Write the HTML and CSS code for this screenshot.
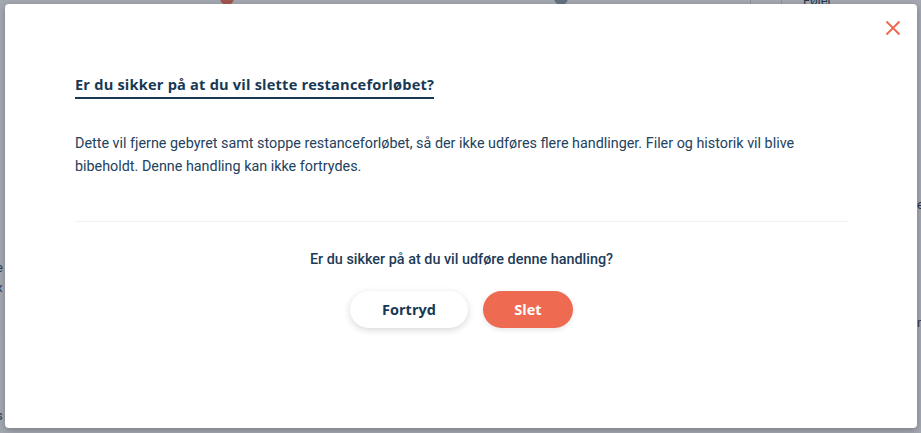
FILE: index.html
```html
<!DOCTYPE html>
<html lang="da">
<head>
<meta charset="utf-8">
<title>Slet restanceforløb</title>
<link rel="stylesheet" href="styles.css">
</head>
<body>
<div class="page">
  <span class="bg-dot bg-dot-red"></span>
  <span class="bg-dot bg-dot-grey"></span>
  <span class="bg-vline bg-vline-1"></span>
  <span class="bg-vline bg-vline-2"></span>
  <span class="bg-text bg-text-top">Føler</span>
  <span class="bg-text bg-text-l1">e</span>
  <span class="bg-text bg-text-l2">x</span>
  <span class="bg-text bg-text-l3">t</span>
  <span class="bg-text bg-text-l4">s</span>
  <span class="bg-text bg-text-r1">e</span>
  <span class="bg-text bg-text-r2">n</span>
</div>
<div class="backdrop"></div>
<div class="modal" role="dialog" aria-modal="true">
  <button class="close" aria-label="Luk">
    <svg width="16" height="16" viewBox="0 0 16 16"><path d="M1.5 1.5 L14.5 14.5 M14.5 1.5 L1.5 14.5" stroke="#ee6a50" stroke-width="2" stroke-linecap="butt" fill="none"/></svg>
  </button>
  <div class="modal-body">
    <h2 class="title">Er du sikker på at du vil slette restanceforløbet?</h2>
    <p class="text">Dette vil fjerne gebyret samt stoppe restanceforløbet, så der ikke udføres flere handlinger. Filer og historik vil blive bibeholdt. Denne handling kan ikke fortrydes.</p>
    <hr class="divider">
    <div class="confirm">
      <p class="question">Er du sikker på at du vil udføre denne handling?</p>
      <div class="actions">
        <button class="btn btn-cancel">Fortryd</button>
        <button class="btn btn-delete">Slet</button>
      </div>
    </div>
  </div>
</div>
</body>
</html>
```

FILE: styles.css
```css
* { box-sizing: border-box; }
html, body { margin: 0; padding: 0; }
body {
  width: 921px;
  height: 433px;
  overflow: hidden;
  background: #f4f5f7;
  font-family: Roboto, "Liberation Sans", sans-serif;
  position: relative;
}
.page { position: absolute; inset: 0; }
.bg-dot { position: absolute; width: 14px; height: 14px; border-radius: 50%; top: -9px; }
.bg-dot-red { left: 220px; background: #ee6a50; }
.bg-dot-grey { left: 554px; background: #8a96a3; }
.bg-vline { position: absolute; top: 0; width: 1px; height: 14px; background: #c9ced6; }
.bg-vline-1 { left: 750px; }
.bg-vline-2 { left: 781px; }
.bg-text { position: absolute; font-size: 13px; color: #1d3b57; line-height: 1; }
.bg-text-top { left: 803px; top: -6px; }
.bg-text-l1 { left: -4px; top: 261px; }
.bg-text-l2 { left: -4px; top: 281px; }
.bg-text-l3 { left: -4px; top: 323px; }
.bg-text-l4 { left: -4px; top: 409px; }
.bg-text-r1 { left: 917px; top: 198px; }
.bg-text-r2 { left: 917px; top: 316px; }

.backdrop {
  position: absolute; inset: 0;
  background: rgba(50, 60, 78, 0.42);
}

.modal {
  position: absolute;
  left: 5px; top: 4px;
  width: 912px; height: 424px;
  background: #fff;
  border-radius: 4px;
  box-shadow: 0 2px 6px rgba(0,0,0,0.25);
}
.close {
  position: absolute;
  right: 12px; top: 12px;
  width: 24px; height: 24px;
  padding: 4px;
  border: 0; background: transparent;
  display: flex; align-items: center; justify-content: center;
  cursor: pointer;
}
.modal-body {
  padding: 70px 69px 0 70px;
}
.title {
  display: inline-block;
  margin: 0;
  font-family: "Open Sans", "Liberation Sans", sans-serif;
  font-weight: 700;
  font-size: 14.6px;
  letter-spacing: 0.2px;
  line-height: 20px;
  color: #183954;
  padding-bottom: 3px;
  border-bottom: 2px solid #183954;
}
.text {
  margin: 33px 0 0;
  font-size: 14.35px;
  line-height: 23px;
  color: #22425e;
}
.divider {
  border: 0;
  border-top: 1px solid #f1f2f3;
  margin: 43px 0 0;
}
.confirm {
  display: flex; flex-direction: column; align-items: center;
}
.question {
  margin: 28px 0 0;
  font-size: 14.4px;
  line-height: 20px;
  font-weight: 500;
  color: #1d3b57;
}
.actions {
  display: flex; gap: 15px;
  margin-top: 21px;
}
.btn {
  height: 37px;
  border: 0;
  border-radius: 19px;
  font-family: "Open Sans", "Liberation Sans", sans-serif;
  font-weight: 700;
  font-size: 14.5px;
  cursor: pointer;
}
.btn-cancel {
  width: 118px;
  background: #fff;
  color: #183954;
  box-shadow: 0 2px 7px rgba(0,0,0,0.16);
}
.btn-delete {
  width: 90px;
  background: #ee6a50;
  color: #fff;
  box-shadow: 0 2px 5px rgba(0,0,0,0.1);
}
```
